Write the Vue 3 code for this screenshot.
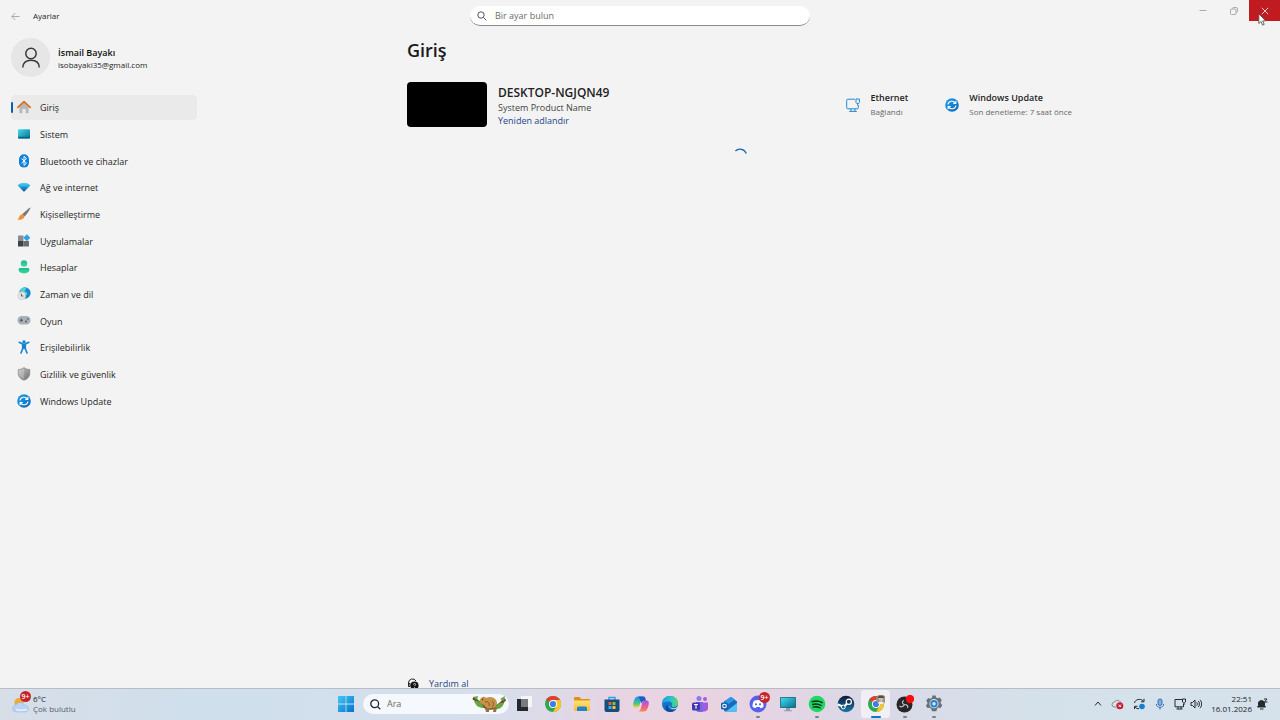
<template>
  <div class="desktop">
    <svg class="sprite" width="0" height="0" aria-hidden="true">
      <defs>
        <linearGradient id="g-screen" x1="0" y1="0" x2="1" y2="1">
          <stop offset="0" stop-color="#3fdcec" />
          <stop offset="1" stop-color="#0b6f92" />
        </linearGradient>
        <linearGradient id="g-blue" x1="0" y1="0" x2="1" y2="1">
          <stop offset="0" stop-color="#25a0e8" />
          <stop offset="1" stop-color="#0868b8" />
        </linearGradient>
        <linearGradient id="g-wifi" x1="0" y1="0" x2="0" y2="1">
          <stop offset="0" stop-color="#58d8f0" />
          <stop offset="0.5" stop-color="#1b95d3" />
          <stop offset="1" stop-color="#0b5599" />
        </linearGradient>
        <linearGradient id="g-green" x1="0" y1="0" x2="0" y2="1">
          <stop offset="0" stop-color="#23b990" />
          <stop offset="1" stop-color="#36d9a0" />
        </linearGradient>
        <linearGradient id="g-shield" x1="0" y1="0" x2="1" y2="1">
          <stop offset="0" stop-color="#c9c9c9" />
          <stop offset="1" stop-color="#6d6d6d" />
        </linearGradient>
        <linearGradient id="g-win" x1="0" y1="0" x2="1" y2="1">
          <stop offset="0" stop-color="#3fc9f5" />
          <stop offset="1" stop-color="#0672cf" />
        </linearGradient>
        <linearGradient id="g-folder" x1="0" y1="0" x2="0" y2="1">
          <stop offset="0" stop-color="#ffe07a" />
          <stop offset="1" stop-color="#f6bd2b" />
        </linearGradient>
        <linearGradient id="g-edge" x1="0" y1="0" x2="1" y2="0">
          <stop offset="0" stop-color="#1d9de0" />
          <stop offset="0.6" stop-color="#2cc6c4" />
          <stop offset="1" stop-color="#62d95c" />
        </linearGradient>
        <linearGradient id="g-cop-a" x1="0" y1="0" x2="0" y2="1">
          <stop offset="0" stop-color="#1f8ff0" />
          <stop offset="0.6" stop-color="#3fc38b" />
          <stop offset="1" stop-color="#f5cf2c" />
        </linearGradient>
        <linearGradient id="g-cop-b" x1="0" y1="0" x2="0" y2="1">
          <stop offset="0" stop-color="#9a55e6" />
          <stop offset="0.5" stop-color="#ea5a9a" />
          <stop offset="1" stop-color="#f78a3b" />
        </linearGradient>
        <linearGradient id="g-steam" x1="0" y1="0" x2="0" y2="1">
          <stop offset="0" stop-color="#101a36" />
          <stop offset="1" stop-color="#1879ad" />
        </linearGradient>
      </defs>

      <symbol id="i-home" viewBox="0 0 14 14">
        <path d="M2.4 6.2 7 2.2l4.6 4v6.4a.7.7 0 0 1-.7.7H8.6V9H5.4v4.3H3.1a.7.7 0 0 1-.7-.7z" fill="#b9b9b9" />
        <path d="M.8 7.400 7 1.600l6.200 5.800" fill="none" stroke="#d5711d" stroke-width="1.700" stroke-linecap="round" stroke-linejoin="round" />
      </symbol>
      <symbol id="i-system" viewBox="0 0 14 14">
        <rect x="1" y="2.200" width="12" height="9.400" rx="1" fill="url(#g-screen)" />
        <path d="M1 9.800h12v.8a1 1 0 0 1-1 1H2a1 1 0 0 1-1-1z" fill="#0b6785" />
      </symbol>
      <symbol id="i-bluetooth" viewBox="0 0 14 14">
        <rect x="2" y="0.200" width="10" height="13.400" rx="5" fill="#1180dc" />
        <path d="m4.500 4.600 5 4.600L7 11.400V2.400l2.500 2.200-5 4.600" fill="none" stroke="#fff" stroke-width="1" stroke-linejoin="round" />
      </symbol>
      <symbol id="i-wifi" viewBox="0 0 14 14">
        <path d="M.6 5.200C4.200 1.900 9.800 1.900 13.400 5.200L7.700 11.200a1 1 0 0 1-1.400 0z" fill="url(#g-wifi)" />
        <path d="M2.600 6.900c2.500-2.200 6.300-2.200 8.800 0" fill="none" stroke="#5cc5ec" stroke-width=".5" />
      </symbol>
      <symbol id="i-brush" viewBox="0 0 14 14">
        <path d="M13.500.4c.5.600-3.700 6.900-6.300 9.200L5 7.500C7.300 4.900 12.900 0 13.500.4z" fill="#777" />
        <path d="M5.100 7.200c1.500.300 2.200 1.100 2.300 2.500-.7 2.600-4 3.500-7.200 3 2.300-1.200 1.500-4.700 4.900-5.500z" fill="#ed9135" />
      </symbol>
      <symbol id="i-apps" viewBox="0 0 14 14">
        <path d="M1 1.500h5.500V7H1z" fill="#8b8e91" />
        <path d="M1 7h5.500v5.500H1z" fill="#3e4246" />
        <path d="M6.500 7H12v5.500H6.500z" fill="#686c70" />
        <path d="m9.800.300 3.500 3.400-3.500 3.500-3.500-3.500z" fill="#2aa4e5" />
      </symbol>
      <symbol id="i-account" viewBox="0 0 14 14">
        <circle cx="7" cy="3.400" r="3.200" fill="url(#g-green)" />
        <path d="M1.600 9.500a1.400 1.400 0 0 1 1.400-1.400h8a1.400 1.400 0 0 1 1.400 1.400c0 5.200-10.800 5.200-10.800 0z" fill="url(#g-green)" />
      </symbol>
      <symbol id="i-time" viewBox="0 0 14 14">
        <circle cx="7.900" cy="6" r="5.700" fill="#1788c9" />
        <path d="M3 3.200C5 .5 8 .2 9.300.600c.400 2-1.500 2.200-1.500 3.900 2 .3 3.400 1.600 2 3.600L5 7z" fill="#4fd3d6" />
        <circle cx="4.700" cy="8.700" r="4" fill="#e4e4e4" stroke="#bbb" stroke-width=".4" />
        <path d="M4.400 6.700V9h2" fill="none" stroke="#555" stroke-width=".9" />
      </symbol>
      <symbol id="i-game" viewBox="0 0 14 14">
        <rect x="0.500" y="2" width="13" height="8.600" rx="4.200" fill="#a9b0b7" />
        <path d="M4.300 4.500v3.400M2.600 6.200H6" stroke="#555b61" stroke-width="1.100" />
        <circle cx="10.800" cy="4.900" r="1" fill="#3a86b4" />
        <circle cx="9" cy="7.500" r="1" fill="#555b61" />
      </symbol>
      <symbol id="i-access" viewBox="0 0 14 14">
        <circle cx="7" cy="1.900" r="1.700" fill="#1584cf" />
        <path d="M2.200 2.300 6 4.300h2l3.800-2M7 4.500v4M5.700 4.500V8.500L4 13M8.300 4.500v4L10 13" fill="none" stroke="#1584cf" stroke-width="1.600" stroke-linecap="round" stroke-linejoin="round" />
      </symbol>
      <symbol id="i-shield" viewBox="0 0 14 14">
        <path d="M7 .5c1.700 1.300 3.600 1.900 5.800 2v4C12.800 9.700 10.600 12 7 13.300 3.400 12 1.200 9.700 1.200 6.500v-4C3.400 2.400 5.300 1.800 7 .500z" fill="url(#g-shield)" stroke="#777" stroke-width=".5" />
        <path d="M7 1.400v10.900C4 11 2.100 9.200 2.100 6.500V3.300C4 3.200 5.600 2.500 7 1.400z" fill="#fff" opacity=".2" />
      </symbol>
      <symbol id="i-update" viewBox="0 0 14 14">
        <circle cx="7" cy="7" r="6.800" fill="url(#g-blue)" />
        <path d="M3 6.500C3.500 3 8.200 2 10.500 4.900M11 7.500C10.500 11 5.800 12 3.500 9.100" fill="none" stroke="#fff" stroke-width="1.100" />
        <path d="M10.900 2.700v2.700H8.200M3.100 11.300V8.600h2.700" fill="none" stroke="#fff" stroke-width="1.100" />
      </symbol>

      <symbol id="t-view" viewBox="0 0 18 18">
        <path d="M6 1h11v11H6z" fill="#f6f6f6" />
        <path d="M2 4h11v12H2z" fill="#777c82" />
        <path d="M2 4h4v8h7v4H2z" fill="#24282c" />
      </symbol>
      <symbol id="t-chrome" viewBox="0 0 18 18">
        <circle cx="9" cy="9" r="8" fill="#30a853" />
        <path d="M9 9 2.070 5A8 8 0 0 1 15.930 5z" fill="#e23d31" />
        <path d="M9 5h6.930A8 8 0 0 1 9 17l3.500-6z" fill="#fbc525" />
        <circle cx="9" cy="9" r="4" fill="#fff" />
        <circle cx="9" cy="9" r="3.100" fill="#3c7ee8" />
      </symbol>
      <symbol id="t-folder" viewBox="0 0 18 18">
        <path d="M1 3a1 1 0 0 1 1-1h4.500l1.700 2H16a1 1 0 0 1 1 1v3H1z" fill="#d99414" />
        <path d="M1 5.500h16V15a1 1 0 0 1-1 1H2a1 1 0 0 1-1-1z" fill="url(#g-folder)" />
        <path d="M4 13a1.500 1.500 0 0 1 1.500-1.500h7A1.500 1.500 0 0 1 14 13v3H4z" fill="#2481cb" />
      </symbol>
      <symbol id="t-store" viewBox="0 0 18 18">
        <path d="M6 5V2.500h6V5" fill="none" stroke="#2aa5df" stroke-width="1.400" />
        <path d="M1.500 4.500h15V15a2 2 0 0 1-2 2h-11a2 2 0 0 1-2-2z" fill="#174c7c" />
        <path d="M5.500 7h3v3h-3z" fill="#f25b34" />
        <path d="M9.500 7h3v3h-3z" fill="#83c332" />
        <path d="M5.500 11h3v3h-3z" fill="#31aeec" />
        <path d="M9.500 11h3v3h-3z" fill="#fbc52c" />
      </symbol>
      <symbol id="t-copilot" viewBox="0 0 18 18">
        <path d="M6 1.500h5.500c-2 .8-2.300 3-3 5.500C7.700 10 7.500 12.500 5 12.500H3.500C1 12.500.7 10 1.500 7.500S3 1.500 6 1.500z" fill="url(#g-cop-a)" />
        <path d="M12 16.500H6.500c2-.8 2.300-3 3-5.500.800-3 1-5.500 3.500-5.500h1.500c2.500 0 2.800 2.500 2 5s-1.500 6-4.500 6z" fill="url(#g-cop-b)" />
        <path d="M6.500 1.500h5c1.700 0 2 2 2.500 4-3 0-3.800 1-4.500 3z" fill="#2359c7" />
      </symbol>
      <symbol id="t-edge" viewBox="0 0 18 18">
        <circle cx="9" cy="9" r="8" fill="#1474c8" />
        <path d="M1 9C1 4 4.500 1 9 1c5 0 8 3.500 8 7 0 2.500-2 4-4.300 4-1.700 0-2.500-.7-2-1.500C12 8.500 10 6.500 7.500 6.500 4 6.500 1.700 8 1 9z" fill="url(#g-edge)" />
        <path d="M6.800 9.500c-1 3 1.500 6 5 5.500 1.200-.2 2.500-.8 3.700-1.700-1.500 3-6 5-9.500 2.700C3.500 14 4.300 10.300 6.800 9.500z" fill="#124b93" />
        <path d="M8.600 8.900c-1 1.200-.3 3.200 1.700 4 2.200.9 5 .3 6.500-1.700 0 1-.5 1.900-1.200 2.400-2 1.200-4.600.8-6.200-.5-1.400-1.200-1.800-3-.8-4.200z" fill="#e2dce8" />
      </symbol>
      <symbol id="t-teams" viewBox="0 0 18 18">
        <circle cx="8" cy="3.500" r="2.500" fill="#8b7be8" />
        <circle cx="14" cy="4" r="2" fill="#a55ce0" />
        <path d="M5 7h7v10H8c-2 0-3-1-3-3z" fill="#746be0" />
        <path d="M11 7.500h6V13c0 2.500-2 4-5 3.500z" fill="#a35bdc" />
        <rect x="1" y="7.500" width="8" height="8" rx="1.500" fill="#4438b2" />
        <path d="M3 9.500h4M5 9.500v4.200" stroke="#fff" stroke-width="1.100" />
      </symbol>
      <symbol id="t-outlook" viewBox="0 0 18 18">
        <path d="M4 6.500 11 2l6 4.500V15a1.500 1.500 0 0 1-1.500 1.500h-10A1.500 1.500 0 0 1 4 15z" fill="#1e67bd" />
        <path d="m5 6 6-4.200 4 2.800-8 5.400z" fill="#2b9ae6" />
        <path d="m17 8-11 8.500h9.500A1.500 1.500 0 0 0 17 15z" fill="#4fc3f4" />
        <rect x="1" y="7.500" width="7" height="7" rx="1.500" fill="#1263ad" />
        <circle cx="4.500" cy="11" r="1.800" fill="none" stroke="#fff" stroke-width="1.100" />
      </symbol>
      <symbol id="t-discord" viewBox="0 0 18 18">
        <circle cx="9" cy="9" r="8.500" fill="#5662ea" />
        <path d="M5 5.800c2.600-1.200 5.400-1.200 8 0 1 1.700 1.600 3.800 1.500 6-1 .8-2 1.200-3 1.400l-.7-1.200H7.200l-.7 1.200c-1-.2-2-.6-3-1.400-.1-2.200.500-4.300 1.500-6z" fill="#fff" />
        <circle cx="7" cy="9.300" r="1.100" fill="#5662ea" />
        <circle cx="11" cy="9.300" r="1.100" fill="#5662ea" />
      </symbol>
      <symbol id="t-pc" viewBox="0 0 18 18">
        <rect x="1" y="2" width="16" height="11" rx=".8" fill="#26667f" />
        <rect x="1.800" y="2.800" width="14.400" height="9.400" fill="url(#g-screen)" />
        <path d="M7 13h4v2.200h2v1H5v-1h2z" fill="#8ba0ac" />
      </symbol>
      <symbol id="t-spotify" viewBox="0 0 18 18">
        <circle cx="9" cy="9" r="8.300" fill="#1fd862" />
        <path d="M4.200 6.700c3.200-1 7-.7 10 .9M4.700 9.500c2.800-.8 6-.4 8.500 1M5.200 12.100c2.300-.6 4.800-.3 6.900.9" fill="none" stroke="#10291a" stroke-width="1.400" stroke-linecap="round" />
      </symbol>
      <symbol id="t-steam" viewBox="0 0 18 18">
        <circle cx="9" cy="9" r="8.300" fill="url(#g-steam)" />
        <path d="m1.500 9.700 4.800 2M6.300 12l5-4.500" stroke="#fff" stroke-width="2.200" stroke-linecap="round" />
        <circle cx="11.800" cy="6.800" r="2.600" fill="#1c3355" stroke="#fff" stroke-width="1.200" />
        <circle cx="6.300" cy="12" r="1.900" fill="#1f6189" stroke="#fff" stroke-width="1" />
      </symbol>
      <symbol id="t-profile" viewBox="0 0 18 18">
        <use href="#t-chrome" />
        <circle cx="14" cy="4.500" r="5" fill="#98918a" />
        <circle cx="14" cy="3.800" r="2.200" fill="#d4bda5" />
        <path d="M10.500 2.500C11 0 17 0 17.500 2.500l-1.500.4h-4z" fill="#574c42" />
        <path d="M11 8c.5-2 5.500-2 6 0-1.500 1.700-4.500 1.700-6 0z" fill="#eee" />
      </symbol>
      <symbol id="t-obs" viewBox="0 0 18 18">
        <circle cx="8.500" cy="9.500" r="8" fill="#26262a" />
        <path d="M8 5.500C5.500 6 6 9 8.500 9.500c2.500 0 4 1.500 3 3.500M8.500 9.500c-1.300 2.500-3.500 3-5 1.300" fill="none" stroke="#c3c3c3" stroke-width="1.200" />
        <circle cx="14" cy="4" r="4.200" fill="#fb0c0c" />
      </symbol>
      <symbol id="t-gear" viewBox="0 0 18 18">
        <path d="m7.400.500h3.200l.5 2 1.700.8 2-.8 2 2.800-1.200 1.700.2 1.700 1.500 1.400-1.600 2.900-2-.4-1.600 1-.7 2.600H7l-.8-2.500-1.700-1-2.100.3L.8 10.600l1.500-1.500.1-1.700L1.200 5.700l2-2.700 2 .7 1.700-.8z" fill="#66717c" />
        <circle cx="9" cy="8.700" r="4.600" fill="#dce5ec" />
        <circle cx="9" cy="8.700" r="3.700" fill="#2d83c5" />
        <circle cx="9" cy="8.700" r="1.700" fill="#d8e6ef" />
      </symbol>
    </svg>

    <div class="window">
      <header class="title-bar">
        <div class="title-left">
          <button class="back" type="button" aria-label="Geri">
            <svg width="9" height="9" viewBox="0 0 9 9"><path d="M8.500 4.500H.8M4.300 1 .8 4.500 4.300 8" /></svg>
          </button>
          <span>Ayarlar</span>
        </div>
        <label class="find">
          <svg width="10" height="10" viewBox="0 0 10 10"><circle cx="4" cy="4" r="3.200" /><path d="m6.400 6.400 3 3" /></svg>
          <input type="text" placeholder="Bir ayar bulun" aria-label="Bir ayar bulun" />
        </label>
        <div class="caption">
          <button type="button" aria-label="Simge durumuna küçült">
            <svg width="8" height="8" viewBox="0 0 8 8"><path d="M.5 3.500h7" /></svg>
          </button>
          <button type="button" aria-label="Önceki boyut">
            <svg width="8" height="8" viewBox="0 0 8 8"><rect x=".5" y="2" width="5.500" height="5.500" rx="1" /><path d="M2.500 1.700c0-.8.500-1.200 1.200-1.200h2.400c.9 0 1.400.5 1.400 1.400v2.400c0 .7-.4 1.200-1.200 1.200" /></svg>
          </button>
          <button class="close" type="button" aria-label="Kapat">
            <svg width="8" height="8" viewBox="0 0 8 8"><path d="m.8.8 6.400 6.400M7.200.8.8 7.200" /></svg>
          </button>
        </div>
      </header>

      <div class="body">
        <aside class="sidebar">
          <div class="user">
            <span class="avatar">
              <svg width="20" height="22" viewBox="0 0 20 22"><circle cx="10" cy="6.500" r="5.200" /><path d="M1.800 20.500c0-4.600 3.200-7.300 8.200-7.300s8.200 2.700 8.200 7.300" /></svg>
            </span>
            <div class="user-text">
              <div class="user-name">İsmail Bayakı</div>
              <div class="user-mail">isobayaki35@gmail.com</div>
            </div>
          </div>
          <nav class="menu">
            <a
                v-for="item in menu"
                :key="item.icon"
                href="#"
                class="menu-item"
                :class="{ active: item.active }"
            >
              <svg width="14" height="14"><use :href="`#i-${item.icon}`" /></svg>
              <span>{{ item.label }}</span>
            </a>
          </nav>
        </aside>

        <main class="main">
          <h1>Giriş</h1>
          <section class="device">
            <div class="wallpaper"></div>
            <div class="device-info">
              <h2>DESKTOP-NGJQN49</h2>
              <p>System Product Name</p>
              <a href="#">Yeniden adlandır</a>
            </div>
            <div class="status ethernet">
              <svg width="14" height="14" viewBox="0 0 14 14">
                <path d="M9 1.200H1.700a1 1 0 0 0-1 1v7.600a1 1 0 0 0 1 1h9.600a1 1 0 0 0 1-1V7M5 11v2.200M9 11v2.200M3.200 13.400h7.600M10 1h3.400v3.500l-.7 1H10.700l-.7-1zM11.700 5.500v2" />
              </svg>
              <div>
                <h3>Ethernet</h3>
                <p>Bağlandı</p>
              </div>
            </div>
            <div class="status">
              <svg width="14" height="14"><use href="#i-update" /></svg>
              <div>
                <h3>Windows Update</h3>
                <p>Son denetleme: 7 saat önce</p>
              </div>
            </div>
          </section>
          <svg class="spinner" width="16" height="16" viewBox="0 0 16 16" role="img" aria-label="Yükleniyor">
            <path d="M3.400 3A6.700 6.700 0 0 1 14.300 5.500" />
          </svg>
          <a class="help" href="#">
            <svg width="12" height="12" viewBox="0 0 12 12">
              <path d="M1.500 7V5a4 4 0 0 1 7.500-2M1.500 5.500v3h1.500v-3z" fill="none" stroke="#222" stroke-width="1" />
              <circle cx="7.500" cy="7.500" r="4" fill="#111" />
              <path d="M6.300 6.500c.2-1.500 2.500-1.300 2.400 0 0 .8-1.200.8-1.200 1.700M7.500 9v.8" fill="none" stroke="#fff" stroke-width=".8" />
            </svg>
            <span>Yardım al</span>
          </a>
        </main>
      </div>
    </div>

    <footer class="taskbar">
      <button class="weather" type="button">
        <span class="weather-icon">
          <svg width="18" height="18" viewBox="0 0 18 18">
            <circle cx="7" cy="7.500" r="4.500" fill="#f0a92f" />
            <path d="M4 17a3.500 3.500 0 0 1 .2-7c1-3.500 7-3.500 8 0 5.500-.2 5.500 7 1 7z" fill="#b9d3f5" stroke="#91b4e5" stroke-width=".5" />
            <path d="M4 14.500c2 1 8 1 11 0" stroke="#e7f1ff" stroke-width="1.500" fill="none" />
          </svg>
          <span class="badge">9+</span>
        </span>
        <span class="weather-text">
          <b>6°C</b>
          <span>Çok bulutlu</span>
        </span>
      </button>

      <div class="dock">
        <button class="start" type="button" aria-label="Başlat">
          <svg width="16" height="16" viewBox="0 0 16 16"><path d="M0 0h7.600v7.600H0zM8.400 0H16v7.600H8.400zM0 8.400h7.600V16H0zM8.400 8.400H16V16H8.400z" fill="url(#g-win)" /></svg>
        </button>
        <label class="search">
          <svg width="11" height="11" viewBox="0 0 11 11"><circle cx="4.700" cy="4.700" r="3.900" /><path d="m7.600 7.600 2.700 2.700" /></svg>
          <input type="text" placeholder="Ara" aria-label="Ara" />
          <svg class="doodle" width="34" height="18" viewBox="0 0 34 18">
            <path d="M1 3c6 3 9 9 15 10s11-1 17-9" fill="none" stroke="#684a2b" stroke-width="3" />
            <path d="M2 6c4-1 8 1 10 7-5 0-8-2-10-7zM22 14c2-4 6-7 10-6-1 4-5 7-10 6zM28 4l5-3-1 5zM1 2l5-1-1 4z" fill="#65a83e" />
            <path d="M8 5c1-4 5-4 6-2 4-2 8-1 10 2s1 7-3 8c-4 1-8 0-9-3-2-1-5-2-4-5z" fill="#c69449" />
            <path d="M13 7c3-1 5 1 4 4M20 6c2 2 2 4 0 6" stroke="#805824" fill="none" />
            <path d="M13 13h4v4h-3zM22 12h3l-1 5h-3z" fill="#967040" />
            <circle cx="10.500" cy="4.500" r=".7" fill="#422a13" />
          </svg>
        </label>
        <div class="apps">
          <button
              v-for="app in apps"
              :key="app.icon"
              type="button"
              class="app"
              :class="{ running: app.running, focused: app.focused }"
              :aria-label="app.name"
          >
            <svg width="18" height="18"><use :href="`#t-${app.icon}`" /></svg>
            <span v-if="app.badge" class="badge">{{ app.badge }}</span>
          </button>
        </div>
      </div>

      <div class="tray">
        <svg width="8" height="12" viewBox="0 0 8 12"><path d="m1 7.500 3-3.500 3 3.500" /></svg>
        <svg width="13" height="12" viewBox="0 0 13 12">
          <path d="M5 9H3.500a2.500 2.500 0 0 1 0-5C5 1.500 9 2 9.500 4.500" stroke="#858b91" />
          <circle cx="8.800" cy="7.800" r="3.500" class="red" />
          <path d="m7.600 6.600 2.400 2.400M10 6.600 7.600 9" stroke="#fff" />
        </svg>
        <svg width="13" height="12" viewBox="0 0 13 12">
          <path d="M1.500 5C2 1.500 7 0 10.500 3M11 .8v3H8M6 10.500C4.500 11 3 10.300 2 9M1.500 11V8.300h3" />
          <circle cx="9" cy="8.500" r="2.800" class="dot" />
        </svg>
        <svg class="mic" width="10" height="12" viewBox="0 0 10 12"><rect x="3" y="1" width="4" height="6.500" rx="2" class="mic-body" /><path d="M1.300 6c0 4.500 7.400 4.500 7.400 0M5 9.500v2" /></svg>
        <div class="quick">
          <svg width="12" height="12" viewBox="0 0 12 12"><path d="M8 1.500H1v7.300h8.500V6M4 9v2M7 9v2M2.500 11h6M8.500 1h3v3l-.8.700H9.300L8.500 4zM10 5v2" /></svg>
          <svg width="12" height="12" viewBox="0 0 12 12"><path d="M1 4.500h1.500L5 2v8L2.500 7.500H1zM6.700 4.300c.8 1 .8 2.400 0 3.400M8.300 3c1.500 1.700 1.500 4.300 0 6M10 1.800c2.200 2.500 2.200 5.900 0 8.400" /></svg>
        </div>
        <div class="clock">
          <time>22:51</time>
          <time>16.01.2026</time>
        </div>
        <svg width="12" height="12" viewBox="0 0 12 12">
          <path d="M1.500 9 2.500 7.500V5C2.500 2 8 1.500 8.500 5v2.500L9.500 9zM4 11h3.500" fill="#252a2f" />
          <path d="M8 1h3L8.500 4H11.500" />
        </svg>
      </div>
    </footer>

    <svg class="pointer" width="9" height="13" viewBox="0 0 9 13"><path d="M.8.800v9.700l2.300-2 1.500 3.600 1.600-.7-1.500-3.500h3z" fill="#fff" stroke="#444" stroke-width=".8" /></svg>
  </div>
</template>

<script setup>
const menu = [
  { icon: 'home', label: 'Giriş', active: true },
  { icon: 'system', label: 'Sistem' },
  { icon: 'bluetooth', label: 'Bluetooth ve cihazlar' },
  { icon: 'wifi', label: 'Ağ ve internet' },
  { icon: 'brush', label: 'Kişiselleştirme' },
  { icon: 'apps', label: 'Uygulamalar' },
  { icon: 'account', label: 'Hesaplar' },
  { icon: 'time', label: 'Zaman ve dil' },
  { icon: 'game', label: 'Oyun' },
  { icon: 'access', label: 'Erişilebilirlik' },
  { icon: 'shield', label: 'Gizlilik ve güvenlik' },
  { icon: 'update', label: 'Windows Update' }
];

const apps = [
  { icon: 'view', name: 'Görev görünümü' },
  { icon: 'chrome', name: 'Google Chrome' },
  { icon: 'folder', name: 'Dosya Gezgini' },
  { icon: 'store', name: 'Microsoft Store' },
  { icon: 'copilot', name: 'Copilot' },
  { icon: 'edge', name: 'Microsoft Edge' },
  { icon: 'teams', name: 'Microsoft Teams' },
  { icon: 'outlook', name: 'Outlook' },
  { icon: 'discord', name: 'Discord', badge: '9+', running: true },
  { icon: 'pc', name: 'Bu bilgisayar' },
  { icon: 'spotify', name: 'Spotify', running: true },
  { icon: 'steam', name: 'Steam' },
  { icon: 'profile', name: 'Google Chrome', focused: true },
  { icon: 'obs', name: 'OBS Studio', running: true },
  { icon: 'gear', name: 'Ayarlar', running: true }
];
</script>

<style>
body {
  margin: 0;
  background: #f3f3f3;
}
</style>

<style scoped>
.desktop {
  position: relative;
  display: flex;
  flex-direction: column;
  min-height: 100vh;
  font-family: "Open Sans", "Noto Sans", sans-serif;
  font-size: 9px;
  line-height: 12px;
  color: #1f1f1f;
  background: #f3f3f3;
}

.sprite {
  display: block;
}

button,
input {
  font: inherit;
  color: inherit;
  border: 0;
  padding: 0;
  background: none;
}

a {
  color: inherit;
  text-decoration: none;
}

h1,
h2,
h3,
p {
  margin: 0;
}

.window {
  flex: 1;
  display: flex;
  flex-direction: column;
}

.title-bar {
  display: grid;
  grid-template-columns: 1fr 340px 1fr;
  height: 32px;
}

.title-left {
  display: flex;
  align-items: center;
  gap: 13px;
  padding-left: 11px;
  font-size: 8px;
}

.title-left svg,
.find svg,
.caption svg {
  fill: none;
  stroke: #555;
}

.back {
  display: flex;
}

.title-left .back svg {
  stroke: #aaa;
}

.find {
  display: flex;
  align-items: center;
  gap: 8px;
  height: 19px;
  margin-top: 6px;
  padding-left: 7px;
  background: #fff;
  border-bottom: 1px solid #8a8a8a;
  border-radius: 10px;
}

.find input,
.search input {
  flex: 1;
  min-width: 0;
  outline: none;
}

.find input::placeholder,
.search input::placeholder {
  color: #6a6a6a;
  opacity: 1;
}

.caption {
  display: flex;
  justify-content: flex-end;
}

.caption button {
  display: flex;
  align-items: center;
  justify-content: center;
  width: 31px;
  height: 21px;
}

.caption svg {
  stroke: #aaa;
}

.caption .close {
  background: #c11b22;
}

.caption .close svg {
  stroke: #f3c9ca;
}

.body {
  flex: 1;
  display: flex;
}

.sidebar {
  width: 200px;
}

.user {
  display: flex;
  align-items: center;
  gap: 8px;
  padding: 6px 0 0 11px;
}

.avatar {
  display: flex;
  align-items: center;
  justify-content: center;
  width: 39px;
  height: 39px;
  border-radius: 50%;
  background: #e6e6e6;
}

.avatar svg {
  fill: none;
  stroke: #3a3a3a;
  stroke-width: 1.5;
}

.user-text {
  padding-top: 2px;
}

.user-name {
  font-weight: 600;
  color: #111;
}

.user-mail {
  font-size: 8px;
}

.menu {
  display: grid;
  grid-auto-rows: 1fr;
  height: 320px;
  margin: 18px 3px 0 11px;
}

.menu-item {
  position: relative;
  display: flex;
  align-items: center;
  gap: 9px;
  margin-bottom: 2px;
  padding-left: 6px;
  border-radius: 4px;
}

.menu-item span {
  padding-top: 2px;
}

.menu-item.active {
  background: #eaeaea;
}

.menu-item.active::before {
  content: '';
  position: absolute;
  left: 0;
  width: 2px;
  height: 11px;
  border-radius: 1px;
  background: #0a62ab;
}

.main {
  flex: 1;
  display: flex;
  flex-direction: column;
  max-width: 666px;
  margin: 0 auto;
}

h1 {
  margin-top: 6px;
  font-size: 18px;
  line-height: 24px;
  font-weight: 600;
  color: #1a1a1a;
}

.device {
  display: flex;
  align-items: center;
  margin-top: 20px;
}

.wallpaper {
  width: 80px;
  height: 45px;
  border-radius: 4px;
  background: #000;
}

.device-info {
  flex: 1;
  margin-left: 11px;
  padding-top: 3px;
}

.device-info h2 {
  font-size: 12px;
  line-height: 16px;
  font-weight: 600;
}

.device-info p,
.device-info a {
  display: block;
  line-height: 13px;
}

.device-info p {
  color: #444;
}

.device-info a,
.help {
  color: #1d4587;
}

.status {
  display: flex;
  align-items: center;
  gap: 10px;
  margin-right: 1px;
}

.status.ethernet {
  margin-right: 37px;
}

.ethernet > svg {
  fill: none;
  stroke: #2589cb;
}

.status h3 {
  font-size: 9px;
  line-height: 14px;
  font-weight: 600;
}

.status p {
  font-size: 8px;
  line-height: 13px;
  color: #696969;
}

.spinner {
  align-self: center;
  margin-top: 21px;
  fill: none;
  stroke: #1467ad;
  stroke-width: 1.3;
}

.help {
  display: flex;
  align-items: center;
  gap: 10px;
  height: 9px;
  margin-top: auto;
}

.taskbar {
  display: grid;
  grid-template-columns: 1fr auto 1fr;
  height: 31px;
  border-top: 1px solid #b8bdc4;
  background: linear-gradient(90deg, #d7dee8 0%, #cfdfec 16%, #d6dfec 38%, #e7d4e3 48%, #ead3e1 56%, #dad8e7 68%, #d5e1ea 80%, #d5e2ec 100%);
}

.weather,
.dock,
.tray {
  height: 30px;
}

.weather {
  display: flex;
  align-items: center;
  gap: 3px;
  padding-left: 12px;
  text-align: left;
}

.weather-icon {
  position: relative;
  display: flex;
}

.weather-text {
  display: flex;
  flex-direction: column;
  font-size: 8px;
  line-height: 10px;
  color: #555d66;
}

.weather-text b {
  font-weight: 400;
  color: #20262d;
}

.badge {
  position: absolute;
  top: -4px;
  right: -1px;
  width: 11px;
  height: 11px;
  border-radius: 50%;
  background: #c4232c;
  color: #fff;
  font-size: 7px;
  line-height: 11px;
  font-weight: 600;
  text-align: center;
}

.dock {
  display: flex;
  align-items: center;
}

.start {
  display: flex;
  justify-content: center;
  width: 30px;
}

.search {
  display: flex;
  align-items: center;
  gap: 6px;
  width: 136px;
  height: 20px;
  margin-left: 2px;
  padding: 0 3px 0 7px;
  border-radius: 10px;
  background: #f5f8fc;
}

.search svg:first-child {
  fill: none;
  stroke: #20242a;
  stroke-width: 1.3;
}

.apps {
  display: flex;
  width: 440px;
}

.app {
  position: relative;
  flex: 1;
  display: flex;
  align-items: center;
  justify-content: center;
  height: 28px;
}

.app svg {
  width: 18px;
  height: 18px;
  overflow: visible;
}

.app .badge {
  top: 2px;
  right: 3px;
}

.app.focused {
  border-radius: 3px;
  background: rgba(255, 255, 255, 0.6);
}

.app.running::after,
.app.focused::after {
  content: '';
  position: absolute;
  bottom: 0;
  width: 4px;
  height: 2px;
  border-radius: 1px;
  background: #7d8288;
}

.app.focused::after {
  width: 10px;
  background: #1475c3;
}

.tray {
  display: flex;
  align-items: center;
  justify-content: flex-end;
  gap: 9px;
  padding-right: 12px;
}

.tray svg {
  fill: none;
  stroke: #252a2f;
}

.tray .red {
  fill: #ca1d36;
  stroke: none;
}

.tray .dot {
  fill: #147fd0;
  stroke: none;
}

.tray .mic {
  stroke: #366caf;
}

.tray .mic-body {
  fill: #83b1e4;
}

.quick {
  display: flex;
  gap: 4px;
}

.clock {
  display: flex;
  flex-direction: column;
  font-size: 8px;
  line-height: 10px;
  text-align: right;
}

.clock + svg {
  margin-left: -5px;
}

.pointer {
  position: absolute;
  top: 13px;
  right: 13px;
}
</style>
